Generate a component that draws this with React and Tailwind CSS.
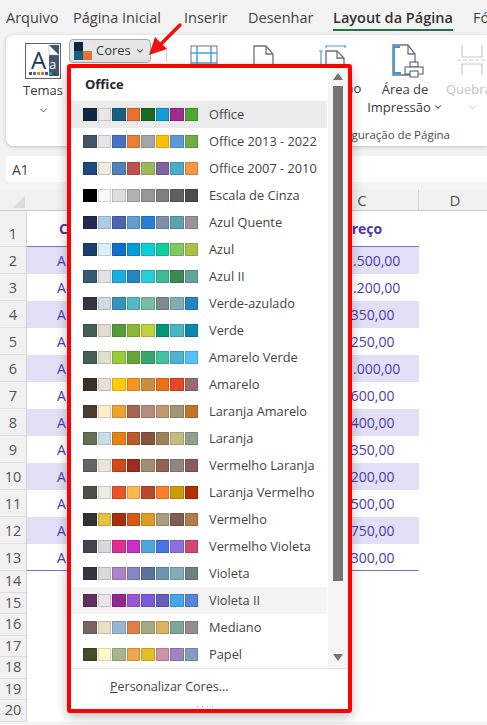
import React from "react";
import { ChevronDown } from "lucide-react";

const tabs = [
    { label: "Arquivo", className: "ml-[6px] w-[67px] shrink-0" },
    { label: "Página Inicial", className: "w-[111px] shrink-0" },
    { label: "Inserir", className: "w-[64px] shrink-0" },
    { label: "Desenhar", className: "w-[85px] shrink-0" },
];

const palettes = [
    ["Office", ["#0e2841", "#e8e8e8", "#156082", "#e97132", "#196b24", "#0f9ed5", "#a02b93", "#4ea72e"]],
    ["Office 2013 - 2022", ["#44546a", "#e7e6e6", "#4472c4", "#ed7d31", "#a5a5a5", "#ffc000", "#5b9bd5", "#70ad47"]],
    ["Office 2007 - 2010", ["#1f497d", "#eeece1", "#4f81bd", "#c0504d", "#9bbb59", "#8064a2", "#4bacc6", "#f79646"]],
    ["Escala de Cinza", ["#000000", "#f8f8f8", "#dddddd", "#b2b2b2", "#969696", "#808080", "#5f5f5f", "#4d4d4d"]],
    ["Azul Quente", ["#242852", "#acccea", "#4a66ac", "#629dd1", "#297fd5", "#7f8fa9", "#5aa2ae", "#9d90a0"]],
    ["Azul", ["#17406d", "#dbeff9", "#0f6fc6", "#009dd9", "#0bd0d9", "#10cf9b", "#7cca62", "#a5c249"]],
    ["Azul II", ["#335b74", "#dfe3e5", "#1cade4", "#2683c6", "#27ced7", "#42ba97", "#3e8853", "#62a39f"]],
    ["Verde-azulado", ["#373545", "#cedbe6", "#3494ba", "#58b6c0", "#75bda7", "#7a8c8e", "#84acb6", "#2683c6"]],
    ["Verde", ["#455f51", "#e3ded1", "#549e39", "#8ab833", "#c0cf3a", "#029676", "#4ab5c4", "#0989b1"]],
    ["Amarelo Verde", ["#455f51", "#e2dfcc", "#99cb38", "#63a537", "#37a76f", "#44c1a3", "#4eb3cf", "#51c3f9"]],
    ["Amarelo", ["#39302a", "#e5dedb", "#ffca08", "#f8931d", "#ce8d3e", "#ec7016", "#e64823", "#9c6a6a"]],
    ["Laranja Amarelo", ["#4e3b30", "#fbeec9", "#f0a22e", "#a5644e", "#b58b80", "#c3986d", "#a19574", "#c17529"]],
    ["Laranja", ["#637052", "#ccddea", "#e48312", "#bd582c", "#865640", "#9b8357", "#c2bc80", "#94a088"]],
    ["Vermelho Laranja", ["#696464", "#e9e5dc", "#d34817", "#9b2d1f", "#a28e6a", "#956251", "#918485", "#855d5d"]],
    ["Laranja Vermelho", ["#505046", "#eeece1", "#e8532a", "#ffb84d", "#b9492a", "#fe7d29", "#cf9a0a", "#b42f03"]],
    ["Vermelho", ["#323232", "#e5c243", "#a5300f", "#d55816", "#e19825", "#b19c7d", "#7f5f52", "#b27d49"]],
    ["Vermelho Violeta", ["#454551", "#d8d9dc", "#e32d91", "#c830cc", "#4ea6dc", "#4775e7", "#8971e1", "#d54773"]],
    ["Violeta", ["#373545", "#dcd8dc", "#ad84c6", "#8784c7", "#5d739a", "#6997af", "#84acb6", "#6f8183"]],
    ["Violeta II", ["#632e62", "#eae5eb", "#92278f", "#9b57d3", "#755dd9", "#665eb8", "#45a5ed", "#5982db"]],
    ["Mediano", ["#7c6560", "#eedfc1", "#94b6d2", "#dd8047", "#a5ab81", "#d8b25c", "#7ba79d", "#968c8c"]],
    ["Papel", ["#444d26", "#fefac9", "#a5b592", "#f3a447", "#e7bc29", "#d092a7", "#9c85c0", "#809ec2"]],
];

const prices = ["R$ 1.500,00", "R$ 1.200,00", "R$ 350,00", "R$ 250,00", "R$ 1.000,00", "R$ 600,00", "R$ 400,00", "R$ 350,00", "R$ 200,00", "R$ 500,00", "R$ 750,00", "R$ 300,00"];

function ThemesIcon() {
    return (
        <svg width="36" height="36" viewBox="0 0 36 36">
            <rect x="0.5" y="0.5" width="35" height="35" fill="#fff" stroke="#5a6472" />
            <path d="M24 2h10v31H24z" fill="#44546a" />
            <path d="M24 2l10 10V2z" fill="#44546a" />
            <path d="M24 2v10h10z" fill="#fff" stroke="#8a94a0" strokeWidth="0.5" />
            <text x="6" y="26" fontSize="24" fill="#27374d" fontFamily="Open Sans">A</text>
            <text x="24" y="26" fontSize="13" fill="#fff" fontFamily="Open Sans">a</text>
            {["#44546a", "#4472c4", "#ed7d31", "#70ad47", "#a02b93", "#0f9ed5", "#196b24"].map((c, i) => (
                <rect key={c} x={4 + i * 4} y="29" width="3" height="3" fill={c} />
            ))}
        </svg>
    );
}

function ColorsIcon() {
    return (
        <svg width="18" height="18" viewBox="0 0 18 18" className="shrink-0">
            <rect width="9" height="9" fill="#0e2841" />
            <rect x="9" width="9" height="9" fill="#e8e8e8" />
            <rect y="9" width="9" height="9" fill="#156082" />
            <rect x="9" y="9" width="9" height="9" fill="#e97132" />
        </svg>
    );
}

function MarginsIcon() {
    return (
        <svg width="28" height="36" viewBox="0 0 28 36" fill="none">
            <rect x="1" y="1" width="26" height="34" stroke="#6b7280" />
            <path d="M1 8h26M1 18h26M7 1v34M21 1v34" stroke="#4ba3dc" strokeWidth="1.5" />
        </svg>
    );
}

function PageIcon() {
    return (
        <svg width="30" height="36" viewBox="0 0 30 36" fill="none" stroke="#6b7280" strokeWidth="1.3">
            <path d="M2 1h12l7 8v26H2z" fill="#fff" />
            <path d="M14 1v8h7" />
            <path d="M8 22h14l6 6v7H8z" fill="#fff" />
        </svg>
    );
}

function SizeIcon() {
    return (
        <svg width="28" height="34" viewBox="0 0 28 34" fill="none">
            <path d="M7 1h19M7 0v3M26 0v3M2 6v26M0 6h4M0 32h4" stroke="#4ba3dc" strokeWidth="1.2" />
            <path d="M7 6h11l7 7v19H7z" fill="#fff" stroke="#6b7280" strokeWidth="1.3" />
            <path d="M18 6v7h7" stroke="#6b7280" strokeWidth="1.3" />
        </svg>
    );
}

function PrintAreaIcon() {
    return (
        <svg width="32" height="34" viewBox="0 0 32 34" fill="none">
            <path d="M1 1h15l7 9v21H1z" fill="#fff" stroke="#6b7280" strokeWidth="1.3" />
            <path d="M16 1v9h7" stroke="#6b7280" strokeWidth="1.3" />
            <path d="M2 3h6M2 3v26h7" stroke="#2e9bdc" strokeWidth="1.8" />
            <rect x="18" y="18" width="8" height="5" fill="#fff" stroke="#4b5563" />
            <rect x="13" y="23" width="18" height="7" fill="#fff" stroke="#4b5563" />
            <rect x="18" y="27" width="8" height="6" fill="#fff" stroke="#4b5563" />
        </svg>
    );
}

function BreaksIcon() {
    return (
        <svg width="30" height="32" viewBox="0 0 30 32" fill="none" stroke="#c9c9c9" strokeWidth="1.2">
            <path d="M5 1v12h20V1" />
            <path d="M0 16h30" strokeDasharray="4 2" />
            <path d="M5 31V20h20v11" />
        </svg>
    );
}

function Ribbon() {
    return (
        <div className="ml-[6px] h-[111px] bg-white rounded-l-lg shadow-[0_1px_4px_rgba(0,0,0,0.2)] flex relative">
            <div className="ml-[19px] mt-[8px] w-[36px] shrink-0 flex flex-col items-center gap-[2px]">
                <ThemesIcon />
                <div className="text-[13px] leading-[18px] text-[#3b3b3b]">Temas</div>
                <ChevronDown size={11} strokeWidth={2} className="text-[#444] mt-[4px]" />
            </div>
            <div className="ml-[8px] mt-[4px] h-[24px] w-[82px] shrink-0 bg-[#e6e6e6] border border-[#a8a8a8] rounded-[4px] flex items-center pl-[4px] gap-[4px] text-[13px] text-[#3b3b3b]">
                <ColorsIcon />
                <span>Cores</span>
                <ChevronDown size={10} strokeWidth={2.5} />
            </div>
            <div className="ml-[15px] mt-[11px] w-px h-[16px] shrink-0 bg-[#d5d5d5]" />
            <div className="ml-[23px] mt-[10px] shrink-0"><MarginsIcon /></div>
            <div className="ml-[34px] mt-[10px] shrink-0"><PageIcon /></div>
            <div className="ml-[22px] mt-[10px] w-[58px] shrink-0">
                <div className="ml-[15px] h-[34px]"><SizeIcon /></div>
                <div className="text-[13px] leading-[18px] text-[#3b3b3b]">Tamanho</div>
            </div>
            <div className="ml-[6px] mt-[9px] w-[74px] shrink-0 flex flex-col items-center">
                <div className="ml-[6px] h-[34px]"><PrintAreaIcon /></div>
                <div className="mt-[2px] text-[13px] leading-[18px] text-[#3b3b3b] text-center">Área de</div>
                <div className="flex items-center gap-[2px] text-[13px] leading-[18px] text-[#3b3b3b] whitespace-nowrap">
                    Impressão <ChevronDown size={10} strokeWidth={2.5} />
                </div>
            </div>
            <div className="ml-[6px] mt-[9px] w-[48px] shrink-0 flex flex-col items-center">
                <BreaksIcon />
                <div className="mt-[4px] text-[13px] leading-[18px] text-[#c4c4c4] whitespace-nowrap">Quebras</div>
                <ChevronDown size={11} strokeWidth={2} className="text-[#c4c4c4] mt-[4px]" />
            </div>
            <div className="absolute right-[37px] bottom-[3px] text-[11.5px] leading-[16px] text-[#4a4a4a]">Configuração de Página</div>
        </div>
    );
}

function Sheet() {
    const smallRows = [14, 15, 16, 17, 18, 19, 20];
    return (
        <div className="bg-white">
            <div className="flex h-[21px] bg-[#f1f1f1] border-b border-[#c8c8c8] text-[15px] text-[#555]">
                <div className="w-[27px] shrink-0 flex items-end justify-end pr-[2px] pb-[2px]">
                    <div className="w-0 h-0 border-l-[12px] border-l-transparent border-b-[12px] border-b-[#dcdcdc]" />
                </div>
                <div className="w-[279px] shrink-0 border-r border-[#d4d4d4]" />
                <div className="w-[113px] shrink-0 border-r border-[#d4d4d4] flex items-center justify-center">C</div>
                <div className="w-[72px] shrink-0 flex items-center justify-center">D</div>
            </div>
            <div className="flex">
                <div className="w-[27px] shrink-0 bg-[#f1f1f1] border-r border-[#d4d4d4] text-[14.5px] text-[#555] text-center">
                    <div className="h-[36px] flex items-end justify-center pb-[1px] border-b border-[#dcdcdc]">1</div>
                    {prices.map((_, i) => (
                        <div key={i} className="h-[27px] flex items-center justify-center pt-[2px] border-b border-[#dcdcdc]">{i + 2}</div>
                    ))}
                    {smallRows.map((n) => (
                        <div key={n} className="h-[21.5px] flex items-center justify-center border-b border-[#dcdcdc]">{n}</div>
                    ))}
                </div>
                <div className="w-[392px] shrink-0 text-[14px] text-[#4c3bb3]">
                    <div className="h-[36px] border-b border-[#7b6fd0] flex items-center font-bold text-[#4c35ad]">
                        <span className="w-[279px] pl-[32px]">C</span>
                        <span className="w-[113px] text-center">Preço</span>
                    </div>
                    {prices.map((price, i) => (
                        <div key={i} className={`h-[27px] flex items-center ${i % 2 === 0 ? "bg-[#e2dff6]" : "bg-white"} ${i === 11 ? "border-b border-[#7b6fd0]" : ""}`}>
                            <span className="w-[279px] pl-[30px]">A</span>
                            <span className="w-[113px] text-center">{price}</span>
                        </div>
                    ))}
                </div>
            </div>
        </div>
    );
}

function ColorsMenu() {
    return (
        <div className="absolute left-[67px] top-[64px] w-[285px] h-[649px] bg-white border-4 border-[#ff0000] rounded-[3px] shadow-[0_4px_12px_rgba(0,0,0,0.25)] flex flex-col">
            <div className="flex h-[600px]">
                <div className="w-[256px]">
                    <div className="h-[33px] pl-[14px] flex items-center text-[13px] font-bold text-[#262626]">Office</div>
                    {palettes.map(([name, colors]) => (
                        <div key={name} className={`h-[27px] flex items-center pl-[12px] ${name === "Office" ? "bg-[#ebebeb]" : name === "Violeta II" ? "bg-[#f4f4f4]" : ""}`}>
                            <div className="flex w-[115px] gap-px shrink-0">
                                {colors.map((c, i) => (
                                    <div key={i} className="h-[13px] flex-1 border border-black/15" style={{ backgroundColor: c }} />
                                ))}
                            </div>
                            <span className="ml-[11px] text-[12.8px] text-[#444] whitespace-nowrap">{name}</span>
                        </div>
                    ))}
                </div>
                <div className="ml-px w-[20px] bg-[#f5f5f5] flex flex-col items-center pr-[1px]">
                    <div className="mt-[5px] w-0 h-0 border-x-[5px] border-x-transparent border-b-[7px] border-b-[#757575]" />
                    <div className="mt-[6px] w-[10px] h-[495px] bg-[#757575]" />
                    <div className="mt-[73px] w-0 h-0 border-x-[5px] border-x-transparent border-t-[7px] border-t-[#757575]" />
                </div>
            </div>
            <div className="flex-1 border-t border-[#e2e2e2] relative">
                <div className="pl-[39px] pt-[9px] text-[12.5px] leading-[18px] text-[#444]">
                    <span className="underline">P</span>ersonalizar Cores...
                </div>
                <div className="absolute bottom-[2px] left-[126px] flex gap-[4px]">
                    {[0, 1, 2, 3].map((i) => (
                        <div key={i} className="w-px h-px bg-[#aaa]" />
                    ))}
                </div>
            </div>
        </div>
    );
}

export default function App() {
    return (
        <div className="relative w-[487px] h-[725px] overflow-hidden bg-[#f3f3f3] font-['Open_Sans',sans-serif]">
            {/* Tabs */}
            <div className="flex h-[35px] items-center text-[14.5px] text-[#424242] whitespace-nowrap">
                {tabs.map((t) => (
                    <div key={t.label} className={t.className}>{t.label}</div>
                ))}
                <div className="w-[140px] shrink-0 relative font-semibold text-[#333]">
                    Layout da Página
                    <div className="absolute left-0 top-[22px] w-[120px] h-[2px] bg-[#217346]" />
                </div>
                <div className="shrink-0">Fó</div>
            </div>

            <Ribbon />

            {/* Name box */}
            <div className="ml-[6px] mt-[10px] h-[26px] bg-white rounded-l-[4px] flex items-center pl-[6px] text-[14px] text-[#444]">A1</div>
            <div className="h-[8px]" />

            <Sheet />
            <ColorsMenu />

            {/* Red arrow */}
            <svg className="absolute left-[145px] top-[20px]" width="40" height="40" viewBox="0 0 40 40" fill="none">
                <path d="M35 5L14 26" stroke="#ee1111" strokeWidth="3.5" strokeLinecap="round" />
                <path d="M4 35L10 17L22 29Z" fill="#ee1111" />
            </svg>
        </div>
    );
}
